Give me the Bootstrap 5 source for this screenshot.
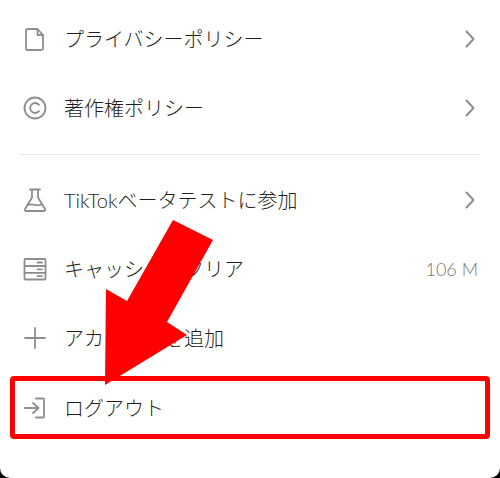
<!DOCTYPE html>
<html lang="ja">
<head>
<meta charset="utf-8">
<title>設定</title>
<link href="https://cdn.jsdelivr.net/npm/bootstrap@5.3.0/dist/css/bootstrap.min.css" rel="stylesheet">
<style>
html,body{height:478px;margin:0;background:#000;overflow:hidden}
body{font-family:Lato,"Noto Sans CJK JP",sans-serif;color:#1f1f22;font-weight:300}
.sheet{position:relative;height:478px;background:#fff;border-radius:0 0 10px 10px;padding-top:4.5px}
.menu-row{height:69.2px;padding:0 22px 0 22px;font-size:20px;line-height:1}
.menu-icon{width:26px;height:26px;flex:none;margin-right:16px;fill:none;stroke:#8e8e90;stroke-width:1.8;stroke-linecap:round;stroke-linejoin:round}
.chev{width:10px;height:18px;fill:none;stroke:#8e8e90;stroke-width:2;stroke-linecap:round;stroke-linejoin:round;margin-right:3px}
.size-val{color:#77777a;font-size:18px}
.sep{height:1px;background:#e8e8ea;margin:11px 20px 10.500px 20px}
.hl-box{position:absolute;left:10px;top:376px;width:480px;height:63px;border:5px solid #f00;border-radius:4px;pointer-events:none}
.pointer{position:absolute;left:0;top:0;width:500px;height:478px;pointer-events:none}
</style>
</head>
<body>
<div class="sheet">
  <div class="menu-row d-flex align-items-center">
    <svg class="menu-icon" viewBox="0 0 26 26"><path d="M5.500 3h10l5.500 6v13.500a1.500 1.500 0 0 1-1.500 1.500h-14a1.500 1.500 0 0 1-1.500-1.500v-18a1.500 1.500 0 0 1 1.500-1.500z"/><path d="M15.500 3v6h5.500"/></svg>
    <span class="flex-grow-1">プライバシーポリシー</span>
    <svg class="chev" viewBox="0 0 10 18"><path d="M1.500 1.500 8.500 9l-7 7.500"/></svg>
  </div>
  <div class="menu-row d-flex align-items-center">
    <svg class="menu-icon" viewBox="0 0 26 26"><circle cx="13" cy="13" r="10.500"/><path d="M17 9.800a5 5 0 1 0 0 6.400"/></svg>
    <span class="flex-grow-1">著作権ポリシー</span>
    <svg class="chev" viewBox="0 0 10 18"><path d="M1.500 1.500 8.500 9l-7 7.500"/></svg>
  </div>
  <div class="sep"></div>
  <div class="menu-row d-flex align-items-center">
    <svg class="menu-icon" viewBox="0 0 26 26"><path d="M8 2.500h10M10 3v7.500L3 22a1.200 1.200 0 0 0 1 2h18a1.200 1.200 0 0 0 1-2l-7-11.500V3"/><path d="M6 18c4-2.500 7 2 14-.5"/></svg>
    <span class="flex-grow-1">TikTokベータテストに参加</span>
    <svg class="chev" viewBox="0 0 10 18"><path d="M1.500 1.500 8.500 9l-7 7.500"/></svg>
  </div>
  <div class="menu-row d-flex align-items-center">
    <svg class="menu-icon" viewBox="0 0 26 26"><rect x="2.500" y="3" width="21" height="20.500" rx="1"/><path d="M2.500 10h21M2.500 16.800h21M15.500 6.500h4.500M15.500 13.400h4.500M15.500 20.200h4.500"/></svg>
    <span class="flex-grow-1">キャッシュをクリア</span>
    <span class="size-val">106 M</span>
  </div>
  <div class="menu-row d-flex align-items-center">
    <svg class="menu-icon" viewBox="0 0 26 26"><path d="M13 3v20M3 13h20"/></svg>
    <span class="flex-grow-1">アカウントを追加</span>
  </div>
  <div class="menu-row d-flex align-items-center">
    <svg class="menu-icon" viewBox="0 0 26 26"><path d="M14 3.500h7a1 1 0 0 1 1 1v17a1 1 0 0 1-1 1h-7M3 13h13M11 8l5.500 5-5.500 5"/></svg>
    <span class="flex-grow-1">ログアウト</span>
  </div>
  <div class="hl-box"></div>
  <svg class="pointer" viewBox="0 0 500 478"><polygon points="105,385 106,289 127,301 173,220 213,240 167,322 187,335" fill="#f00"/></svg>
</div>
</body>
</html>
